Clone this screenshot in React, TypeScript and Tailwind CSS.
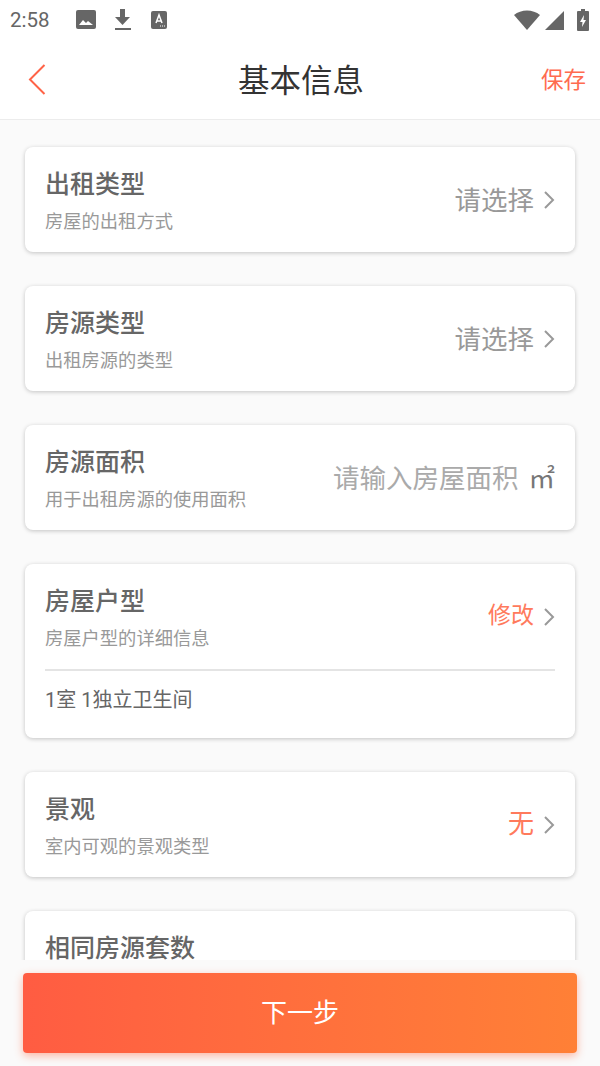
function Chevron() {
  return (
    <svg width="12" height="20" viewBox="0 0 12 20" fill="none" className="ml-[9px] shrink-0">
      <path d="M2 2l8 8-8 8" stroke="#999999" strokeWidth="2" />
    </svg>
  )
}

function Card({ title, sub, children, extra }: { title: string; sub?: string; children?: React.ReactNode; extra?: string }) {
  return (
    <div className="mb-[34px] rounded-[8px] bg-white px-[20px] shadow-[0_1px_4px_rgba(0,0,0,0.22)]">
      <div className="flex h-[105px] items-center justify-between">
        <div className="pt-[4px]">
          <div className="text-[25px] leading-[34px] font-medium text-[#666666]">{title}</div>
          <div className="mt-[7px] min-h-[26px] text-[18.3px] leading-[26px] text-[#999999]">{sub}</div>
        </div>
        <div className="flex items-center">{children}</div>
      </div>
      {extra && (
        <div className="flex h-[69px] items-center border-t-2 border-[#e4e4e4] pb-[9px] text-[20px] text-[#666666]">{extra}</div>
      )}
    </div>
  )
}

function StatusIcons() {
  return (
    <div className="ml-[26px] flex items-center gap-[18px]">
      <svg width="20" height="20" viewBox="0 0 20 20"><rect width="20" height="19" rx="2" fill="#666" /><path d="M3 15l4-5 3 3 2-2 5 4z" fill="#fff" /></svg>
      <svg width="18" height="22" viewBox="0 0 18 22"><path d="M6 0h5v8h5l-7.5 8L1 8h5zM1 19h16v2H1z" fill="#666" /></svg>
      <svg width="16" height="18" viewBox="0 0 16 18" className="ml-[1px]"><rect width="16" height="18" rx="2" fill="#666" /><path d="M5 12l3-8 3 8M6 10h4" stroke="#fff" strokeWidth="1.5" fill="none" /><path d="M9 15h1M11 15h1M13 15h1" stroke="#fff" /></svg>
    </div>
  )
}

export default function App() {
  return (
    <div className="flex h-[1066px] w-[600px] flex-col overflow-hidden bg-[#fafafa] font-['Roboto','Noto_Sans_CJK_SC',sans-serif]">
      {/* Status bar */}
      <div className="flex h-[40px] shrink-0 items-center justify-between bg-white pr-[11px] pl-[10px]">
        <div className="flex items-center">
          <span className="text-[20.5px] leading-none text-[#666666]">2:58</span>
          <StatusIcons />
        </div>
        <div className="flex items-center gap-[5px]">
          <svg width="26" height="20" viewBox="0 0 26 20"><path d="M0 5C7-1 19-1 26 5L13 20z" fill="#666" /></svg>
          <svg width="19" height="19" viewBox="0 0 19 19"><path d="M19 0v19H0z" fill="#666" /></svg>
          <svg width="12" height="22" viewBox="0 0 12 22" className="ml-[8px]"><path d="M4 0h4v2h3a1 1 0 0 1 1 1v18a1 1 0 0 1-1 1H1a1 1 0 0 1-1-1V3a1 1 0 0 1 1-1h3z" fill="#666" /><path d="M7 6L3 13h2.5L5 18l4-7H6.5z" fill="#fff" /></svg>
        </div>
      </div>

      {/* Header */}
      <div className="relative flex h-[80px] shrink-0 items-center justify-between border-b border-[#ececec] bg-white pr-[14px] pl-[28px]">
        <svg width="18" height="31" viewBox="0 0 18 31" fill="none">
          <path d="M16.5 1L2 15.5 16.5 30" stroke="#ff6347" strokeWidth="2" />
        </svg>
        <div className="absolute inset-x-0 top-[20px] pl-[2px] text-center text-[31.5px] leading-[44px] text-[#333333]">基本信息</div>
        <span className="pt-[3px] text-[22.5px] text-[#ff6b4f]">保存</span>
      </div>

      {/* Form */}
      <div className="min-h-0 flex-1 overflow-hidden px-[25px] pt-[27px]">
        <Card title="出租类型" sub="房屋的出租方式">
          <span className="pt-[3px] text-[26.5px] text-[#999999]">请选择</span>
          <Chevron />
        </Card>
        <Card title="房源类型" sub="出租房源的类型">
          <span className="pt-[3px] text-[26.5px] text-[#999999]">请选择</span>
          <Chevron />
        </Card>
        <Card title="房源面积" sub="用于出租房源的使用面积">
          <span className="pt-[3px] text-[26.5px] text-[#aaaaaa]">请输入房屋面积</span>
          <span className="ml-[10px] pt-[3px] text-[26.5px] text-[#777777]">㎡</span>
        </Card>
        <Card title="房屋户型" sub="房屋户型的详细信息" extra="1室 1独立卫生间">
          <span className="text-[23px] text-[#ff7a5c]">修改</span>
          <Chevron />
        </Card>
        <Card title="景观" sub="室内可观的景观类型">
          <span className="text-[26px] text-[#ff7a5c]">无</span>
          <Chevron />
        </Card>
        <Card title="相同房源套数" />
      </div>

      {/* Bottom button */}
      <div className="shrink-0 bg-[#fafafa] px-[23px] pt-[13px] pb-[13px]">
        <button className="flex h-[80px] w-full items-center justify-center rounded-[4px] bg-gradient-to-r from-[#ff5c42] to-[#ff8036] text-[26px] text-white shadow-[0_3px_8px_rgba(255,100,60,0.45)]">
          下一步
        </button>
      </div>
    </div>
  )
}
